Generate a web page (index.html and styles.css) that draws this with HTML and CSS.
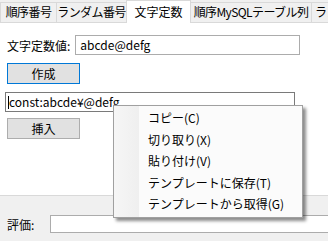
FILE: index.html
```html
<!DOCTYPE html>
<html lang="ja">
<head>
<meta charset="utf-8">
<link rel="stylesheet" href="styles.css">
</head>
<body>
<div class="window">
  <div class="tabs">
    <div class="tab t1">順序番号</div>
    <div class="tab t2">ランダム番号</div>
    <div class="tab t3 active">文字定数</div>
    <div class="tab t4">順序MySQLテーブル列</div>
    <div class="tab t5">ランダム</div>
  </div>
  <div class="panel">
    <div class="row first">
      <span class="label">文字定数値:</span>
      <div class="input value">abcde@defg</div>
    </div>
    <div class="btn primary">作成</div>
    <div class="input result"><span class="caret"></span>const:abcde¥@defg</div>
    <div class="btn">挿入</div>
  </div>
  <div class="lower">
    <div class="row eval">
      <span class="label">評価:</span>
      <div class="input evalbox"></div>
    </div>
    <div class="btnrow">
      <div class="btn wide"></div>
      <div class="btn wide2"></div>
    </div>
  </div>
  <div class="menu">
    <div class="gutter"></div>
    <ul class="items">
      <li>コピー(C)</li>
      <li>切り取り(X)</li>
      <li>貼り付け(V)</li>
      <li>テンプレートに保存(T)</li>
      <li>テンプレートから取得(G)</li>
    </ul>
  </div>
</div>
</body>
</html>
```
FILE: styles.css
```css
html, body {
  margin: 0;
  padding: 0;
}
body {
  width: 328px;
  height: 241px;
  overflow: hidden;
  background: #f0f0f0;
  font-family: "Noto Sans CJK JP", "Noto Sans", sans-serif;
  font-size: 12px;
  color: #000;
}
.window {
  position: relative;
  width: 328px;
  height: 241px;
  overflow: hidden;
}
.tabs {
  display: flex;
  align-items: flex-end;
  height: 22px;
  position: relative;
  z-index: 1;
  white-space: nowrap;
}
.tab {
  box-sizing: border-box;
  height: 20px;
  line-height: 18px;
  border: 1px solid #d9d9d9;
  border-bottom: none;
  background: #f0f0f0;
  text-align: center;
  flex: none;
  margin-right: -1px;
  overflow: hidden;
  letter-spacing: -0.6px;
}
.tab.t1 { width: 57px; }
.tab.t2 { width: 71px; }
.tab.t3 { width: 65px; letter-spacing: 0; }
.tab.t4 { width: 122px; }
.tab.t5 { width: 20px; text-align: left; padding-left: 3px; }
.tab.active {
  height: 23px;
  line-height: 21px;
  background: #fff;
  margin-bottom: -1px;
  position: relative;
  z-index: 2;
}
.panel {
  box-sizing: border-box;
  height: 174px;
  background: #fff;
  border-top: 1px solid #d9d9d9;
  border-bottom: 1px solid #d9d9d9;
  padding: 12px 0 0 7px;
  display: flex;
  flex-direction: column;
  align-items: flex-start;
}
.row {
  display: flex;
  align-items: center;
}
.label {
  flex: none;
}
.input {
  box-sizing: border-box;
  background: #fff;
  border: 1px solid #acacac;
  white-space: nowrap;
}
.value {
  width: 225px;
  height: 20px;
  line-height: 18px;
  padding-left: 4px;
  margin-left: 5px;
}
.btn {
  box-sizing: border-box;
  width: 73px;
  height: 21px;
  line-height: 19px;
  text-align: center;
  background: #e1e1e1;
  border: 1px solid #adadad;
}
.btn.primary {
  border-color: #0078d7;
  margin-top: 8px;
}
.result {
  width: 290px;
  height: 20px;
  line-height: 18px;
  margin-top: 8px;
  margin-left: -2px;
  padding-left: 2px;
  border-color: #7a7a7a;
  display: flex;
  align-items: center;
}
.caret {
  display: inline-block;
  width: 1px;
  height: 13px;
  background: #000;
}
.panel > .btn:last-child {
  margin-top: 6px;
}
.lower {
  padding: 19px 0 0 7px;
}
.eval .label {
  width: 43px;
}
.evalbox {
  flex: 1;
  height: 18px;
  margin-right: -10px;
}
.btnrow {
  display: flex;
  margin-top: 8px;
  padding-left: 29px;
}
.btn.wide {
  width: 142px;
  height: 20px;
}
.btn.wide2 {
  width: 80px;
  margin-left: 92px;
  height: 20px;
}
.menu {
  position: absolute;
  left: 113px;
  top: 105px;
  width: 190px;
  height: 113px;
  box-sizing: border-box;
  background: #fbfbfb;
  border: 1px solid #a0a0a0;
  box-shadow: 3px 3px 3px rgba(0, 0, 0, 0.45);
  z-index: 5;
}
.gutter {
  position: absolute;
  left: 0;
  top: 0;
  bottom: 0;
  width: 25px;
  background: linear-gradient(to right, #f6f6f6, #efefef);
}
.items {
  list-style: none;
  margin: 0;
  padding: 1px 0 0 34px;
  position: relative;
}
.items li {
  height: 21.5px;
  line-height: 21.5px;
  white-space: nowrap;
}
```
